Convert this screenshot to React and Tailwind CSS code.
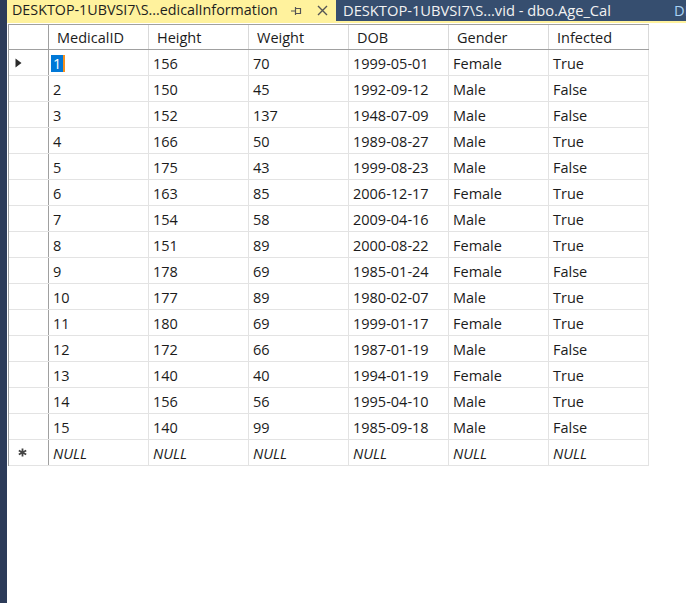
import React from "react";

const columns = ["MedicalID", "Height", "Weight", "DOB", "Gender", "Infected"];

const rows = [
    ["1", "156", "70", "1999-05-01", "Female", "True"],
    ["2", "150", "45", "1992-09-12", "Male", "False"],
    ["3", "152", "137", "1948-07-09", "Male", "False"],
    ["4", "166", "50", "1989-08-27", "Male", "True"],
    ["5", "175", "43", "1999-08-23", "Male", "False"],
    ["6", "163", "85", "2006-12-17", "Female", "True"],
    ["7", "154", "58", "2009-04-16", "Male", "True"],
    ["8", "151", "89", "2000-08-22", "Female", "True"],
    ["9", "178", "69", "1985-01-24", "Female", "False"],
    ["10", "177", "89", "1980-02-07", "Male", "True"],
    ["11", "180", "69", "1999-01-17", "Female", "True"],
    ["12", "172", "66", "1987-01-19", "Male", "False"],
    ["13", "140", "40", "1994-01-19", "Female", "True"],
    ["14", "156", "56", "1995-04-10", "Male", "True"],
    ["15", "140", "99", "1985-09-18", "Male", "False"],
];

const PinIcon = () => (
    <svg width="11" height="10" viewBox="0 0 11 10" className="shrink-0">
        <path d="M0 5h4M4.5 1v8M4.5 2.5h5v5h-5" fill="none" stroke="#555" strokeWidth="1.2" />
    </svg>
);

const CloseIcon = () => (
    <svg width="11" height="11" viewBox="0 0 11 11" className="shrink-0">
        <path d="M1 1l9 9M10 1l-9 9" stroke="#555" strokeWidth="1.4" />
    </svg>
);

const RowArrow = () => (
    <svg width="7" height="10" viewBox="0 0 7 10">
        <path d="M0.5 0.5L6.5 5L0.5 9.5Z" fill="#2b2b2b" />
    </svg>
);

const NewRowStar = () => (
    <svg width="9" height="9" viewBox="0 0 9 9">
        <path d="M4.5 0.5v8M0.8 2.5l7.4 4M0.8 6.5l7.4-4" stroke="#444" strokeWidth="1.8" />
    </svg>
);

const Cell = ({ children, italic }) => (
    <div
        className={`w-[100px] shrink-0 border-r border-[#e3e3e3] pl-[4px] pt-[2px] flex items-center ${italic ? "italic" : ""}`}
    >
        {children}
    </div>
);

export default function App() {
    return (
        <div
            className="w-[686px] h-[603px] flex bg-white overflow-hidden text-[#1b1b1b]"
            style={{ fontFamily: '"Open Sans", "Noto Sans", sans-serif' }}
        >
            {/* barra lateral oscura */}
            <div className="w-[7px] shrink-0 bg-[#2c3b59]" />

            <div className="flex-1 flex flex-col min-w-0">
                {/* pestañas */}
                <div className="h-[21px] flex shrink-0">
                    <div className="w-[329px] shrink-0 bg-[#fff29d] flex items-center pl-[5px] pr-[8px] text-[14.3px] leading-none text-[#1e1e1e]">
                        <span className="whitespace-nowrap">DESKTOP-1UBVSI7\S...edicalInformation</span>
                        <span className="ml-auto mr-[15px] mt-[1px]">
                            <PinIcon />
                        </span>
                        <CloseIcon />
                    </div>
                    <div className="flex-1 bg-[#364e6f] flex items-center pl-[7px] text-[14.7px] leading-none text-[#f2f2f2] whitespace-nowrap overflow-hidden">
                        <span>DESKTOP-1UBVSI7\S...vid - dbo.Age_Cal</span>
                        <span className="ml-[63px] text-[#a9d2f5]">DE</span>
                    </div>
                </div>
                <div className="h-[2px] bg-[#fff29d] shrink-0" />

                {/* rejilla de resultados */}
                <div className="mt-[1px] ml-[1px] text-[14.5px]">
                    <div className="w-[641px] border-t border-l border-[#a0a0a0]">
                        <div className="h-[25px] flex border-b border-[#a0a0a0]">
                            <div className="w-[40px] shrink-0 border-r border-[#a0a0a0]" />
                            {columns.map((c) => (
                                <div
                                    key={c}
                                    className="w-[100px] shrink-0 border-r border-[#d9d9d9] pl-[8px] pt-[1px] flex items-center"
                                >
                                    {c}
                                </div>
                            ))}
                        </div>

                        {rows.map((r, i) => (
                            <div key={i} className="h-[26px] flex border-b border-[#e3e3e3]">
                                <div className="w-[40px] shrink-0 border-r border-[#a0a0a0] flex items-center pl-[6px]">
                                    {i === 0 && <RowArrow />}
                                </div>
                                {r.map((v, j) =>
                                    i === 0 && j === 0 ? (
                                        <div
                                            key={j}
                                            className="w-[100px] shrink-0 border-r border-[#e3e3e3] pl-[2px] pt-[2px] flex items-center"
                                        >
                                            <span className="bg-[#0078d7] text-white px-[2px] leading-[17px] border-r-2 border-[#f7901e]">
                                                {v}
                                            </span>
                                        </div>
                                    ) : (
                                        <Cell key={j}>{v}</Cell>
                                    )
                                )}
                            </div>
                        ))}

                        <div className="h-[26px] flex border-b border-[#e3e3e3]">
                            <div className="w-[40px] shrink-0 border-r border-[#a0a0a0] flex items-center pl-[9px]">
                                <NewRowStar />
                            </div>
                            {columns.map((c) => (
                                <Cell key={c} italic>
                                    NULL
                                </Cell>
                            ))}
                        </div>
                    </div>
                </div>
            </div>
        </div>
    );
}
